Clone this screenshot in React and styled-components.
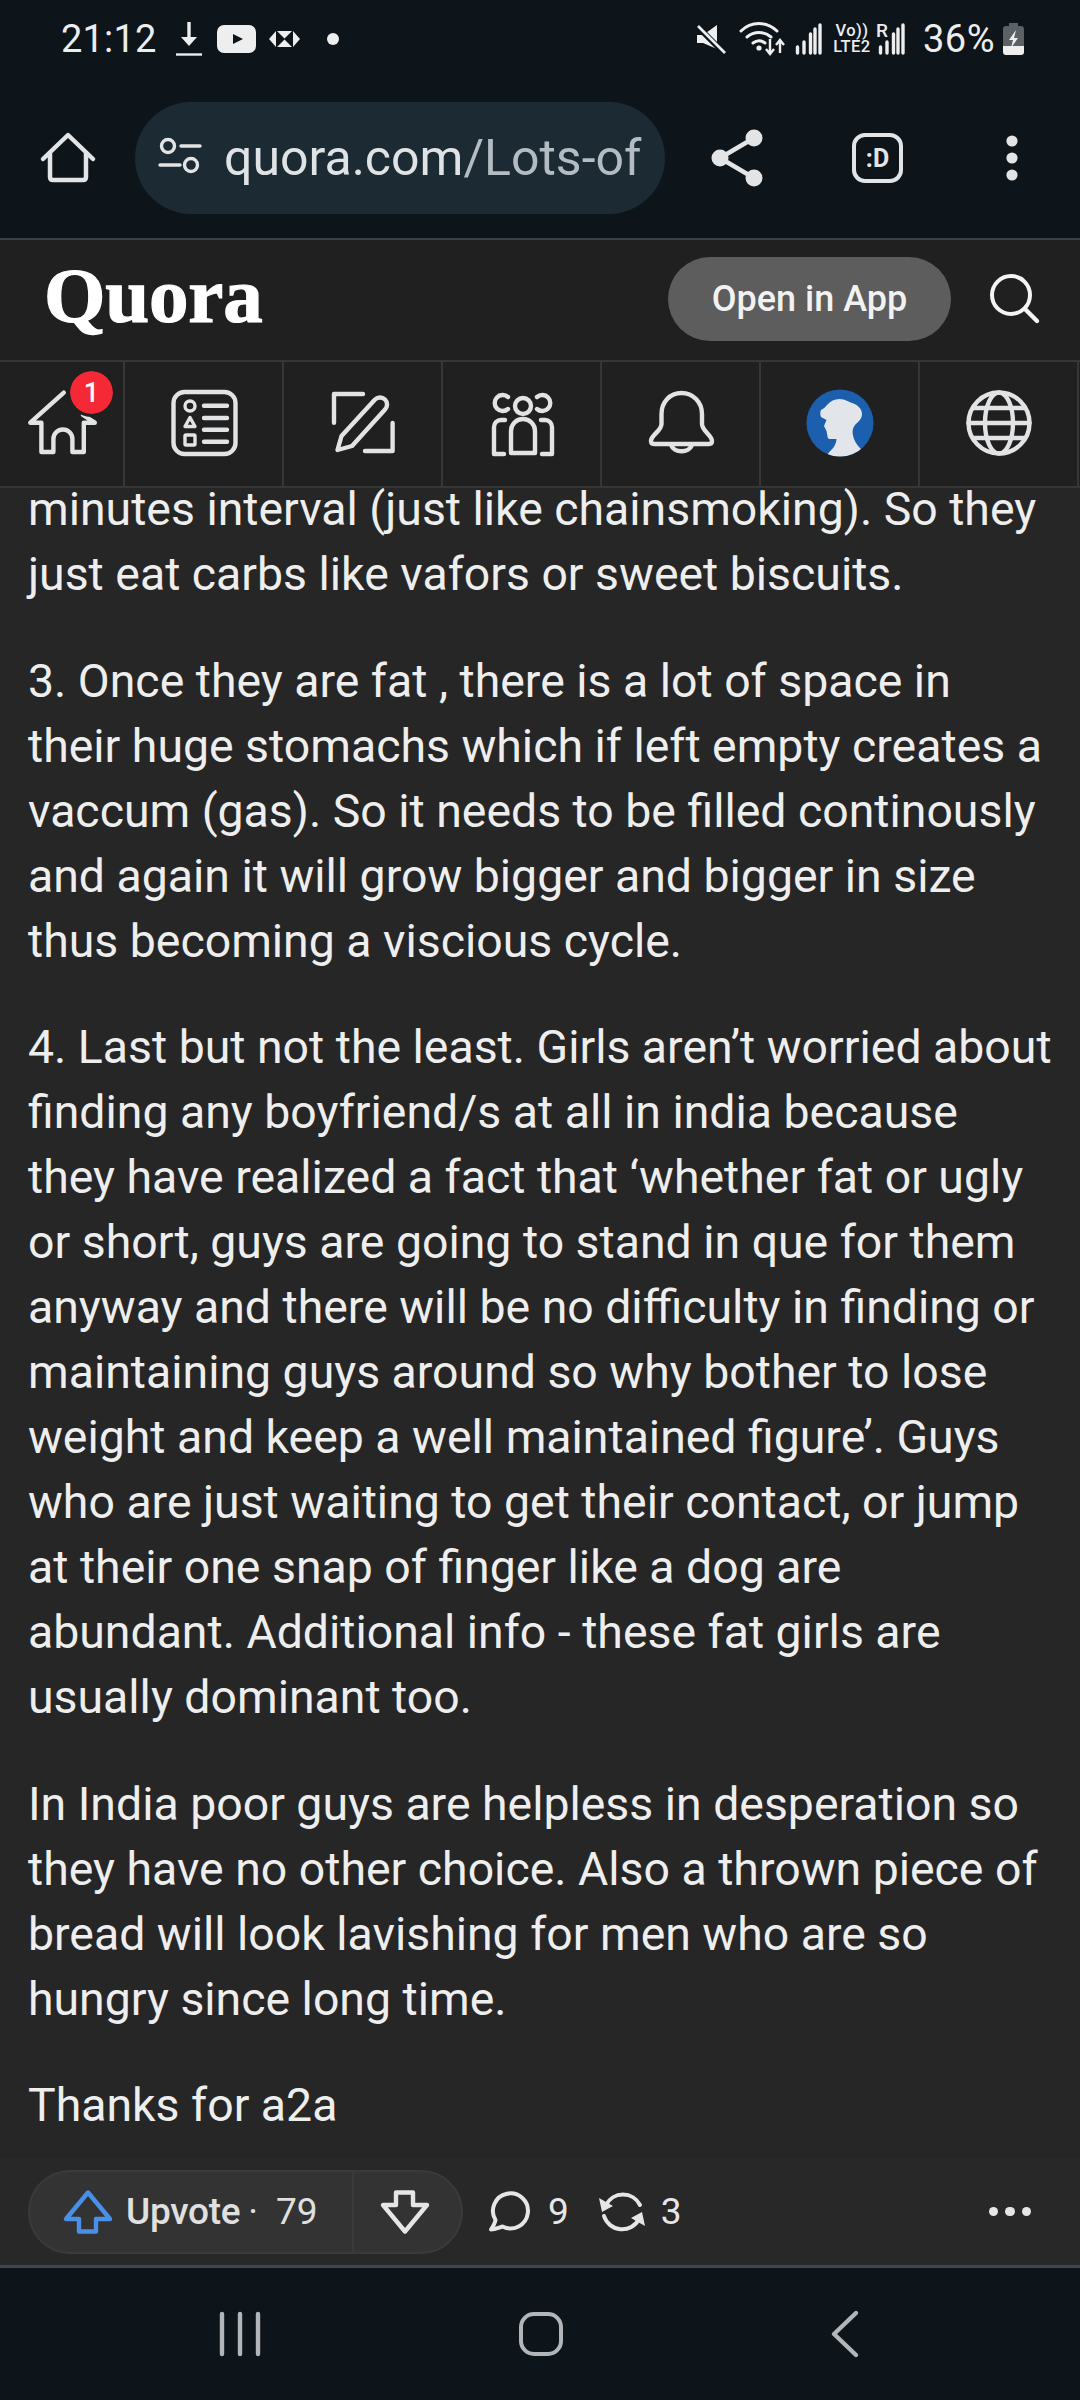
import React from "react";
import styled, { createGlobalStyle } from "styled-components";

const Global = createGlobalStyle`
  html, body { margin: 0; padding: 0; background: #0d141a; }
  * { box-sizing: border-box; }
`;

const Screen = styled.div`
  width: 1080px; height: 2400px; display: flex; flex-direction: column; overflow: hidden;
  font-family: Roboto, "Liberation Sans", sans-serif; background: #262626; color: #eee;
`;
const TopChrome = styled.div`
  background: #0d141a; border-bottom: 2px solid #3b4147; height: 240px; flex: none;
`;
const StatusBar = styled.div`
  height: 78px; display: flex; justify-content: space-between; align-items: center;
  padding: 0 56px 0 61px; color: #eceded;
`;
const StatusGroup = styled.div`display: flex; align-items: center;`;
const Clock = styled.span`font-size: 38px; margin-right: 19px; letter-spacing: .2px;`;
const Glyph = styled.svg`display: block; flex: none; margin-left: ${p => p.$ml || 0}px; overflow: visible;`;
const NetLabel = styled.div`
  display: flex; flex-direction: column; align-items: center; margin-left: 8px; width: 42px;
  font-weight: 500; font-size: 16.5px; line-height: 16px; letter-spacing: .4px; white-space: nowrap;
`;
const RoamBox = styled.div`position: relative; width: 30px; height: 30px; margin-left: 5px;`;
const RoamLetter = styled.span`
  position: absolute; left: -2px; top: -2px; font-size: 19px; font-weight: 500; line-height: 17px;
`;
const Battery = styled.span`font-size: 38px; margin-left: 15px; margin-right: 8px; letter-spacing: .5px;`;

const BrowserBar = styled.div`
  height: 160px; display: flex; align-items: center; padding: 0 0 0 42px;
`;
const UrlPill = styled.div`
  width: 530px; height: 112px; margin-left: 41px; border-radius: 56px; background: #1c2a33;
  display: flex; align-items: center; padding-left: 23px; overflow: hidden; flex: none;
`;
const UrlText = styled.span`
  font-size: 50px; margin-left: 24px; white-space: nowrap; color: #dfe3e6; letter-spacing: 0;
`;
const UrlPath = styled.span`color: #b3bcc2;`;
const TabCount = styled.div`
  width: 51px; height: 50px; border: 4.5px solid #e2e4e6; border-radius: 13px; margin-left: 89px;
  display: flex; align-items: center; justify-content: center; color: #e2e4e6;
  font-size: 25px; font-weight: 700; letter-spacing: 0;
`;

const SiteHeader = styled.div`
  height: 120px; flex: none; background: #202020; display: flex; align-items: center; padding: 0 0 3px 44px;
`;
const Logo = styled.div`
  font-family: "Liberation Serif", serif; font-weight: 700; font-size: 79px; color: #fff; line-height: 1;
  -webkit-text-stroke: 1.2px #fff; letter-spacing: -.2px; margin-top: -6px;
`;
const OpenApp = styled.div`
  margin-left: auto; width: 283px; height: 84px; border-radius: 42px; background: #5d5d5d; color: #f2f2f2;
  display: flex; align-items: center; justify-content: center; font-size: 36px; font-weight: 500;
`;
const SearchSlot = styled.div`width: 129px; display: flex; justify-content: center; padding-right: 2px;`;

const Tabs = styled.div`
  height: 128px; flex: none; background: #202020; display: flex;
  border-top: 2px solid #363636; border-bottom: 2px solid #363636;
`;
const Tab = styled.div`
  position: relative; flex: none; width: ${p => p.$w}px; height: 100%;
  border-right: 2px solid #363636; display: flex; align-items: center; justify-content: center;
`;
const Badge = styled.div`
  position: absolute; left: 70px; top: 9px; width: 43px; height: 43px; border-radius: 50%;
  background: #f52936; border: 3px solid #202020; box-sizing: content-box; margin: -3px;
  display: flex; align-items: center; justify-content: center;
  color: #fff; font-size: 27px; font-weight: 500; background-clip: padding-box;
`;

const Article = styled.div`
  flex: 1; min-height: 0; overflow: hidden; padding: 0 26px 0 28px; background: #262626;
`;
const Para = styled.p`
  margin: 0 0 41.5px; font-size: 46.4px; line-height: 65px; color: #eeeeee; letter-spacing: 0;
  &:first-child { margin-top: -11px; }
`;
const ActionRow = styled.div`
  height: 107px; flex: none; background: #282828; display: flex; align-items: center; padding: 0 0 0 28px;
  border-bottom: 0;
`;
const VotePill = styled.div`
  height: 84px; width: 435px; border-radius: 42px; background: #333333; border: 2px solid #3a3a3a;
  display: flex; align-items: stretch; flex: none;
`;
const Upvote = styled.div`
  width: 324px; display: flex; align-items: center; padding-left: 34px; border-right: 2px solid #3a3a3a;
  font-size: 37px; color: #e0e0e0; white-space: nowrap;
`;
const UpLabel = styled.span`font-weight: 500; margin-left: 14px; letter-spacing: -.3px; font-size: 37px;`;
const Sep = styled.span`margin: 0 18px 0 8px;`;
const Down = styled.div`flex: 1; display: flex; align-items: center; justify-content: center; padding-right: 6px;`;
const Count = styled.span`font-size: 37px; color: #e6e6e6; margin-left: ${p => p.$ml}px;`;
const More = styled.div`margin-left: auto; display: flex; gap: 7px; padding-right: 49px;`;
const MoreDot = styled.span`width: 9.5px; height: 9.5px; border-radius: 50%; background: #e6e6e6;`;

const Divider = styled.div`height: 3px; flex: none; background: #3f464d;`;
const NavBar = styled.div`
  height: 132px; flex: none; background: #0d141a; display: grid;
  grid-template-columns: 300px 302px 306px; padding: 0 0 0 90px; align-items: center; justify-items: center;
`;

const S = { fill: "none", stroke: "#e2e4e6", strokeWidth: 4.5, strokeLinecap: "round", strokeLinejoin: "round" };
const T = { fill: "none", stroke: "#e2e3e4", strokeWidth: 4.4, strokeLinecap: "round", strokeLinejoin: "round" };

const DownloadIcon = () => (
  <Glyph width="26" height="34" viewBox="0 0 26 34" $ml={0}>
    <path d="M13 0v17" stroke="#eee" strokeWidth="3.4" />
    <path d="M5 15h16l-8 9z" fill="#eee" />
    <path d="M0 32.5h26" stroke="#eee" strokeWidth="2.4" />
  </Glyph>
);
const YouTubeIcon = () => (
  <Glyph width="39" height="28" viewBox="0 0 39 28" $ml={15}>
    <rect width="39" height="28" rx="7" fill="#eee" />
    <path d="M16 9l10 5-10 5z" fill="#0d141a" />
  </Glyph>
);
const HsbcIcon = () => (
  <Glyph width="31" height="16" viewBox="0 0 31 16" $ml={13}>
    <path d="M0 8l7-8v16zM31 8l-7-8v16zM8 0h15l-7.5 7.5zM8 16h15l-7.5-7.5z" fill="#eee" />
  </Glyph>
);
const DotIcon = () => (
  <Glyph width="12" height="12" viewBox="0 0 12 12" $ml={27}><circle cx="6" cy="6" r="6" fill="#eee" /></Glyph>
);
const MuteIcon = () => (
  <Glyph width="30" height="30" viewBox="0 0 30 30">
    <path d="M1 11h6l14-10v24L7 19H1z" fill="#eee" />
    <path d="M2 3l26 26" stroke="#0d141a" strokeWidth="6" />
    <path d="M2 2l27 27" stroke="#eee" strokeWidth="2.6" />
  </Glyph>
);
const WifiIcon = () => (
  <Glyph width="45" height="34" viewBox="0 0 45 34" $ml={14}>
    <path d="M1 9C11-1 27-1 37 9M7 15c7-6 17-6 24 0M13 21c4-3 8-3 12 0" fill="none" stroke="#eee" strokeWidth="3" strokeLinecap="round" />
    <circle cx="19" cy="26" r="2.6" fill="#eee" />
    <path d="M30 17v14M26 27l4 5 4-5M40 31V19M36 23l4-5 4 5" fill="none" stroke="#eee" strokeWidth="2.4" />
  </Glyph>
);
const Signal = ({ ml, w = 28 }) => (
  <Glyph width={w} height="30" viewBox="0 0 28 30" $ml={ml}>
    <path d="M2.5 23v6M9 18v11M15.5 10v19M25 1v28" stroke="#eee" strokeWidth="3.4" strokeLinecap="round" />
    <path d="M20 5v24" stroke="#eee" strokeWidth="3.4" strokeLinecap="round" />
  </Glyph>
);
const BatteryIcon = () => (
  <Glyph width="21" height="32" viewBox="0 0 21 32">
    <path d="M6 0h9v3h3q3 0 3 3v20H0V6q0-3 3-3h3z" fill="#5c6166" />
    <path d="M0 23h21v6q0 3-3 3H3q-3 0-3-3z" fill="#eee" />
    <path d="M13 7L6 17h4l-2 8 7-10h-4z" fill="#eee" />
  </Glyph>
);

const BrowserHome = () => (
  <Glyph width="52" height="52" viewBox="0 0 52 52">
    <path d="M1 27L26 3l25 24M8 21v24q0 3 3 3h30q3 0 3-3V21" {...S} />
  </Glyph>
);
const TuneIcon = () => (
  <Glyph width="42" height="42" viewBox="0 0 42 42">
    <circle cx="10" cy="9" r="6.5" {...S} strokeWidth="3.4" />
    <path d="M23 9h19M2 28h20" {...S} strokeWidth="3.4" />
    <circle cx="33" cy="28" r="6.5" {...S} strokeWidth="3.4" />
  </Glyph>
);
const ShareIcon = () => (
  <Glyph width="52" height="58" viewBox="0 0 52 58" $ml={46}>
    <circle cx="43" cy="9" r="8.5" fill="#e2e4e6" />
    <circle cx="9" cy="29" r="8.5" fill="#e2e4e6" />
    <circle cx="43" cy="49" r="8.5" fill="#e2e4e6" />
    <path d="M43 9L9 29l34 20" {...S} />
  </Glyph>
);
const MenuIcon = () => (
  <Glyph width="12" height="46" viewBox="0 0 12 46" $ml={103}>
    <circle cx="6" cy="6" r="5.6" fill="#e2e4e6" />
    <circle cx="6" cy="23" r="5.6" fill="#e2e4e6" />
    <circle cx="6" cy="40" r="5.6" fill="#e2e4e6" />
  </Glyph>
);
const SearchIcon = () => (
  <Glyph width="50" height="50" viewBox="0 0 50 50">
    <circle cx="21" cy="21" r="19" fill="none" stroke="#f4f4f4" strokeWidth="4" />
    <path d="M35 35l12 12" stroke="#f4f4f4" strokeWidth="4.4" strokeLinecap="round" />
  </Glyph>
);

const TabHome = () => (
  <Glyph width="70" height="70" viewBox="0 0 70 70">
    <path d="M36.8 3.7L3.3 33.7H14.4V63H26.4V50a9.5 9.5 0 0 1 19 0V63H56.8V33.7H67.8L56 26" {...T} />
  </Glyph>
);
const TabList = () => (
  <Glyph width="70" height="70" viewBox="0 0 70 70">
    <rect x="4.5" y="3" width="62" height="62" rx="11" {...T} />
    <circle cx="21" cy="17" r="5" {...T} strokeWidth="3.4" />
    <path d="M21 28.5l5 9H16z" {...T} strokeWidth="3.4" />
    <rect x="16" y="46" width="10" height="10" rx="1" {...T} strokeWidth="3.4" />
    <path d="M35 16.7h23M35 29h23M35 40.7h23M35 52.7h23" {...T} />
  </Glyph>
);
const TabEdit = () => (
  <Glyph width="70" height="70" viewBox="0 0 70 70">
    <path d="M35 5H6V33.7M37 62H64.6V34" {...T} />
    <path d="M9.5 61L13.5 47L47 10.5a7 7 0 0 1 10 10L24 57Z" {...T} />
  </Glyph>
);
const TabSpaces = () => (
  <Glyph width="70" height="70" viewBox="0 0 70 70">
    <circle cx="36" cy="17" r="8" {...T} />
    <path d="M21 8a8 8 0 1 0 0 12M50 8a8 8 0 1 1 0 12" {...T} />
    <path d="M24 64V42a12 12 0 0 1 24 0V64Z" {...T} />
    <path d="M18 31H14a7 7 0 0 0-7 7V65H17M54 31H58a7 7 0 0 1 7 7V65H55" {...T} />
  </Glyph>
);
const TabBell = () => (
  <Glyph width="70" height="70" viewBox="0 0 70 70">
    <path d="M35.5 4C24 4 15.5 13 15.5 25V35C15.5 42 5 46 5 52Q5 55 8 55H63Q66 55 66 52C66 46 56 42 56 35V25C56 13 47 4 35.5 4Z" {...T} />
    <path d="M25 56a11 9 0 0 0 21 0" {...T} />
  </Glyph>
);
const TabAvatar = () => (
  <Glyph width="70" height="70" viewBox="0 0 70 70">
    <defs><clipPath id="av"><circle cx="35" cy="34" r="33.5" /></clipPath></defs>
    <circle cx="35" cy="34" r="33.5" fill="#1c5fae" />
    <path clipPath="url(#av)" fill="#e2e5e9"
      d="M34.5 10C40 10 44 13 47 14C53 16 57 20 57 25C57 30 53 33 50 36C47 40 47 44 49 50C51 55 54 58 58 62L46 72H20L23.5 64C27 60 31 57 31.5 50L25 50Q22.5 50 22.5 47.5L21.5 42L19 37L21.5 31L16 28Q14.5 24 16 21Q20 19 22 16Q27 10 34.5 10Z" />
  </Glyph>
);
const TabGlobe = () => (
  <Glyph width="70" height="70" viewBox="0 0 70 70">
    <g {...T}>
      <circle cx="35" cy="34" r="30.5" />
      <ellipse cx="35" cy="34" rx="14" ry="30.5" />
      <path d="M4.5 34h61M9 19h52M9 49h52" />
    </g>
  </Glyph>
);

const UpArrow = () => (
  <Glyph width="48" height="44" viewBox="0 0 48 44">
    <path d="M24 2.5L2 29H15V41.5H32V29H46Z" fill="none" stroke="#4a90e9" strokeWidth="4.4" strokeLinejoin="round" />
  </Glyph>
);
const DownArrow = () => (
  <Glyph width="48" height="44" viewBox="0 0 48 44">
    <path d="M24 41.5L2 15H15V2.5H32V15H46Z" fill="none" stroke="#e6e6e6" strokeWidth="4.4" strokeLinejoin="round" />
  </Glyph>
);
const CommentIcon = () => (
  <Glyph width="42" height="40" viewBox="0 0 42 40" $ml={25}>
    <path d="M7.5 28A17.5 17.5 0 1 1 14.5 34.5C11 35.5 7 37.5 3 37.5C5 34.5 7 31 7.5 28Z" fill="none" stroke="#e6e6e6" strokeWidth="4" strokeLinejoin="round" />
  </Glyph>
);
const RepostIcon = () => (
  <Glyph width="52" height="48" viewBox="0 0 52 48" $ml={27}>
    <path d="M10 17A19 19 0 0 1 44 17M43 31A19 19 0 0 1 8 28" fill="none" stroke="#e6e6e6" strokeWidth="4" strokeLinecap="round" />
    <path d="M3 10l3 14 11-6zM49 38l-3-14-11 6z" fill="#e6e6e6" />
  </Glyph>
);

const NavRecents = () => (
  <Glyph width="42" height="44" viewBox="0 0 42 44">
    <path d="M3 2v40M21 2v40M39 2v40" stroke="#b3b6b8" strokeWidth="4.4" strokeLinecap="round" />
  </Glyph>
);
const NavHome = () => (
  <Glyph width="44" height="44" viewBox="0 0 44 44">
    <rect x="2" y="2" width="40" height="40" rx="13" fill="none" stroke="#b3b6b8" strokeWidth="4" />
  </Glyph>
);
const NavBack = () => (
  <Glyph width="28" height="46" viewBox="0 0 28 46">
    <path d="M25 2L3 23l22 21" fill="none" stroke="#b3b6b8" strokeWidth="4.4" strokeLinecap="round" strokeLinejoin="round" />
  </Glyph>
);

export default function App() {
  return (
    <Screen>
      <Global />
      <TopChrome>
        <StatusBar>
          <StatusGroup>
            <Clock>21:12</Clock>
            <DownloadIcon /><YouTubeIcon /><HsbcIcon /><DotIcon />
          </StatusGroup>
          <StatusGroup>
            <MuteIcon /><WifiIcon /><Signal ml={10} />
            <NetLabel><span>Vo))</span><span>LTE2</span></NetLabel>
            <RoamBox><RoamLetter>R</RoamLetter><Signal /></RoamBox>
            <Battery>36%</Battery>
            <BatteryIcon />
          </StatusGroup>
        </StatusBar>
        <BrowserBar>
          <BrowserHome />
          <UrlPill>
            <TuneIcon />
            <UrlText>quora.com<UrlPath>/Lots-of</UrlPath></UrlText>
          </UrlPill>
          <ShareIcon />
          <TabCount>:D</TabCount>
          <MenuIcon />
        </BrowserBar>
      </TopChrome>
      <SiteHeader>
        <Logo>Quora</Logo>
        <OpenApp>Open in App</OpenApp>
        <SearchSlot><SearchIcon /></SearchSlot>
      </SiteHeader>
      <Tabs>
        <Tab $w={125}><TabHome /><Badge>1</Badge></Tab>
        <Tab $w={159}><TabList /></Tab>
        <Tab $w={159}><TabEdit /></Tab>
        <Tab $w={159}><TabSpaces /></Tab>
        <Tab $w={159}><TabBell /></Tab>
        <Tab $w={159}><TabAvatar /></Tab>
        <Tab $w={159}><TabGlobe /></Tab>
      </Tabs>
      <Article>
        <Para>minutes interval (just like chainsmoking). So they just eat carbs like vafors or sweet biscuits.</Para>
        <Para>3. Once they are fat , there is a lot of space in their huge stomachs which if left empty creates a vaccum (gas). So it needs to be filled continously and again it will grow bigger and bigger in size thus becoming a viscious cycle.</Para>
        <Para>4. Last but not the least. Girls aren’t worried about finding any boyfriend/s at all in india because they have realized a fact that ‘whether fat or ugly or short, guys are going to stand in que for them anyway and there will be no difficulty in finding or maintaining guys around so why bother to lose weight and keep a well maintained figure’. Guys who are just waiting to get their contact, or jump at their one snap of finger like a dog are abundant. Additional info - these fat girls are usually dominant too.</Para>
        <Para>In India poor guys are helpless in desperation so they have no other choice. Also a thrown piece of bread will look lavishing for men who are so hungry since long time.</Para>
        <Para>Thanks for a2a</Para>
      </Article>
      <ActionRow>
        <VotePill>
          <Upvote><UpArrow /><UpLabel>Upvote</UpLabel><Sep>·</Sep>79</Upvote>
          <Down><DownArrow /></Down>
        </VotePill>
        <CommentIcon /><Count $ml={18}>9</Count>
        <RepostIcon /><Count $ml={13}>3</Count>
        <More><MoreDot /><MoreDot /><MoreDot /></More>
      </ActionRow>
      <Divider />
      <NavBar>
        <NavRecents /><NavHome /><NavBack />
      </NavBar>
    </Screen>
  );
}
